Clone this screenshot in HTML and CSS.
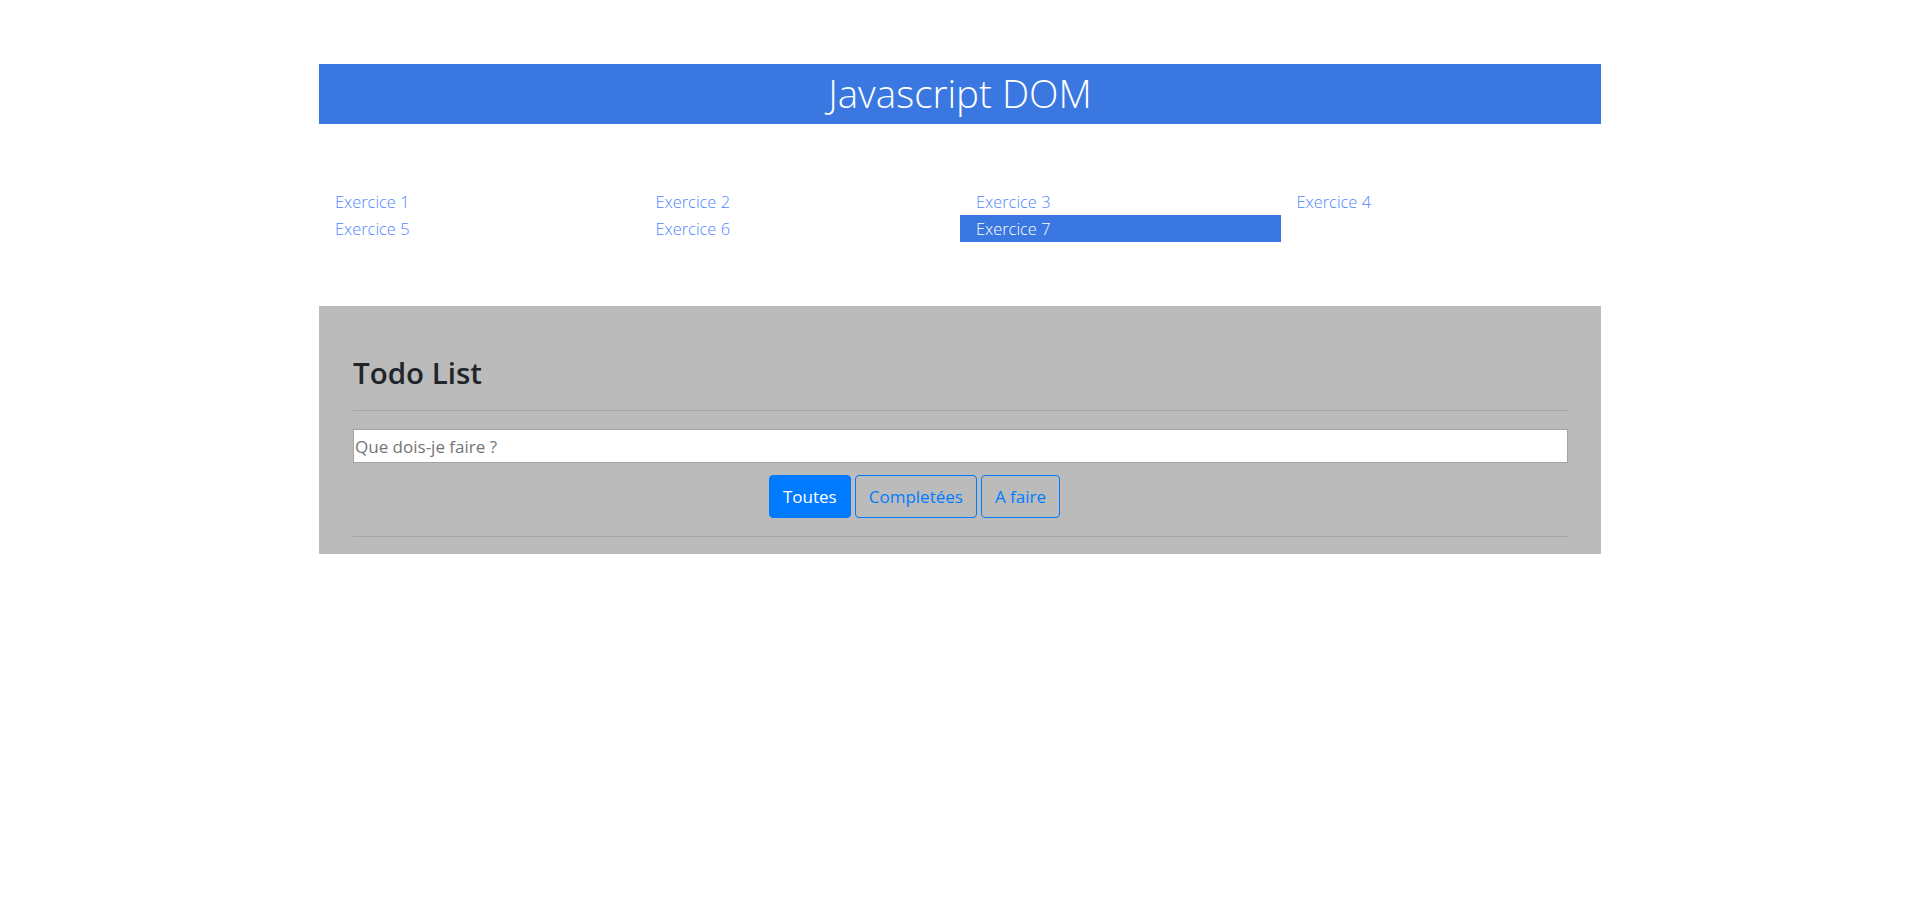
FILE: index.html
```html
<!DOCTYPE html>
<html lang="fr">
<head>
<meta charset="utf-8">
<title>Javascript DOM</title>
<link rel="stylesheet" href="styles.css">
</head>
<body>
<header class="banner">
  <h1 class="banner-title">Javascript DOM</h1>
</header>
<nav class="ex-nav">
  <a class="ex-link" href="#">Exercice 1</a>
  <a class="ex-link" href="#">Exercice 2</a>
  <a class="ex-link" href="#">Exercice 3</a>
  <a class="ex-link" href="#">Exercice 4</a>
  <a class="ex-link" href="#">Exercice 5</a>
  <a class="ex-link" href="#">Exercice 6</a>
  <a class="ex-link ex-link-active" href="#">Exercice 7</a>
</nav>
<section class="todo">
  <h2 class="todo-title">Todo List</h2>
  <hr class="todo-rule">
  <input class="todo-input" type="text" placeholder="Que dois-je faire ?">
  <div class="todo-filters">
    <button class="btn btn-primary" type="button">Toutes</button>
    <button class="btn btn-outline" type="button">Completées</button>
    <button class="btn btn-outline" type="button">A faire</button>
  </div>
  <hr class="todo-rule todo-rule-bottom">
</section>
</body>
</html>
```
FILE: styles.css
```css
* { box-sizing: border-box; }

body {
  margin: 0;
  background: #ffffff;
  font-family: "Open Sans", "Noto Sans", "Liberation Sans", sans-serif;
  color: #212529;
}

.banner {
  width: 1282px;
  margin: 64px auto 0;
  height: 60px;
  background: #3b77e0;
  text-align: center;
}

.banner-title {
  margin: 0;
  color: #ffffff;
  font-weight: 300;
  font-size: 38.5px;
  line-height: 58px;
}

.ex-nav {
  width: 1282px;
  margin: 64px auto 0;
  display: grid;
  grid-template-columns: repeat(4, 1fr);
  grid-auto-rows: 27px;
}

.ex-link {
  display: block;
  padding-left: 16px;
  line-height: 27px;
  font-size: 16.4px;
  font-weight: 300;
  color: #4f86ff;
  text-decoration: none;
}

.ex-link-active {
  background: #3b77e0;
  color: #ffffff;
}

.todo {
  width: 1282px;
  margin: 64px auto 0;
  padding: 47px 33px 17px 34px;
  background: #bbbbbb;
}

.todo-title {
  margin: 0;
  height: 40px;
  font-size: 29.5px;
  line-height: 40px;
  font-weight: 600;
  color: #212529;
}

.todo-rule {
  margin: 17px 0 0;
  border: 0;
  border-top: 1px solid #a6a6a6;
  height: 0;
}

.todo-input {
  display: block;
  width: 100%;
  height: 34px;
  margin-top: 18px;
  padding: 0 1px;
  border: 1px solid #a3a3a3;
  background: #ffffff;
  font-family: inherit;
  font-size: 17px;
  color: #212529;
  outline: none;
}

.todo-input::placeholder {
  color: #757575;
}

.todo-filters {
  display: flex;
  gap: 4px;
  margin-top: 12px;
  padding-left: 416px;
}

.btn {
  height: 43px;
  padding: 0 13px;
  border: 1px solid #007bff;
  border-radius: 4px;
  font-family: inherit;
  font-size: 17px;
  line-height: 41px;
  cursor: pointer;
}

.btn-primary {
  background: #007bff;
  color: #ffffff;
}

.btn-outline {
  background: transparent;
  color: #007bff;
}

.todo-rule-bottom {
  margin-top: 18px;
}
```
